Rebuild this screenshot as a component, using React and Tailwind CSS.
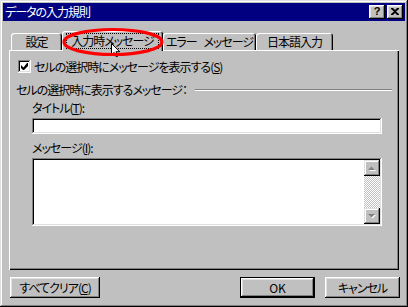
export default function App() {
  return (
    <div className="relative w-[408px] h-[307px] overflow-hidden bg-[#c0c0c0] p-[3px] flex flex-col text-black text-[12px] leading-[14px] tracking-[-1px] font-['Noto_Sans_CJK_JP',sans-serif] [font-feature-settings:'palt'] shadow-[inset_-1px_-1px_#000,inset_1px_1px_#dfdfdf,inset_-2px_-2px_#808080,inset_2px_2px_#fff]">
      {/* Title bar */}
      <div className="h-[18px] bg-[#000080] flex items-center pl-[2px] pr-[2px]">
        <span className="text-white text-[12px] leading-[14px]">データの入力規則</span>
        <div className="ml-auto flex gap-[2px]">
          <div className="w-[16px] h-[14px] bg-[#c0c0c0] flex items-center justify-center shadow-[inset_-1px_-1px_#000,inset_1px_1px_#fff,inset_-2px_-2px_#808080,inset_2px_2px_#dfdfdf]">
            <span className="font-['Liberation_Sans',sans-serif] tracking-normal font-bold text-[11px] leading-[11px] -mt-[1px]">?</span>
          </div>
          <div className="w-[16px] h-[14px] bg-[#c0c0c0] flex items-center justify-center shadow-[inset_-1px_-1px_#000,inset_1px_1px_#fff,inset_-2px_-2px_#808080,inset_2px_2px_#dfdfdf]">
            <svg width="8" height="7" viewBox="0 0 8 7" className="-mt-[1px]">
              <path d="M0 0h2l2 2 2-2h2v1L5 3.5 8 6v1H6L4 5 2 7H0V6l3-2.5L0 1z" fill="#000" />
            </svg>
          </div>
        </div>
      </div>

      {/* Tabs */}
      <div className="mt-[10px] flex items-end pl-[8px]">
        <div className="w-[51px] h-[17px] rounded-t-[3px] flex items-center justify-center pt-[1px] shadow-[inset_1px_1px_#fff,inset_-1px_0_#000,inset_-2px_0_#808080]">
          設定
        </div>
        <div className="relative z-10 w-[101px] h-[20px] -mb-px bg-[#c0c0c0] rounded-t-[3px] pt-[2px] px-[4px] shadow-[inset_1px_1px_#fff,inset_-1px_0_#000,inset_-2px_0_#808080]">
          <div className="h-[16px] border border-dotted border-black flex items-center justify-center">
            入力時メッセージ
          </div>
        </div>
        <div className="w-[93px] h-[17px] rounded-t-[3px] flex items-center justify-center pt-[1px] [word-spacing:5px] shadow-[inset_1px_1px_#fff,inset_-1px_0_#000,inset_-2px_0_#808080]">
          エラー メッセージ
        </div>
        <div className="w-[77px] h-[17px] rounded-t-[3px] flex items-center justify-center pt-[1px] shadow-[inset_1px_1px_#fff,inset_-1px_0_#000,inset_-2px_0_#808080]">
          日本語入力
        </div>
      </div>

      {/* Panel */}
      <div className="mx-[6px] h-[220px] flex flex-col shadow-[inset_1px_1px_#fff,inset_-1px_-1px_#000,inset_-2px_-2px_#808080]">
        <div className="mt-[10px] ml-[9px] flex items-center gap-[3px] h-[13px]">
          <div className="w-[13px] h-[13px] bg-white flex items-center justify-center shadow-[inset_-1px_-1px_#fff,inset_1px_1px_#808080,inset_-2px_-2px_#dfdfdf,inset_2px_2px_#000]">
            <svg width="7" height="7" viewBox="0 0 7 7">
              <path d="M6 0h1v3L3 7H2L0 5V2l2.5 2.5z" fill="#000" />
            </svg>
          </div>
          <span>
            セルの選択時にメッセージを表示する(<span className="underline">S</span>)
          </span>
        </div>

        <div className="mt-[10px] ml-[7px] mr-[7px] h-[14px] flex items-center">
          <span>セルの選択時に表示するメッセージ：</span>
          <div className="flex-1 ml-[8px] h-[2px] border-t border-t-[#808080] border-b border-b-white" />
        </div>

        <div className="mt-[4px] ml-[23px] h-[14px]">
          タイトル(<span className="underline">T</span>):
        </div>
        <div className="mt-[3px] ml-[23px] w-[350px] h-[16px] bg-white shadow-[inset_-1px_-1px_#fff,inset_1px_1px_#808080,inset_-2px_-2px_#dfdfdf,inset_2px_2px_#000]" />

        <div className="mt-[7px] ml-[23px] h-[14px]">
          メッセージ(<span className="underline">I</span>):
        </div>
        <div className="mt-[3px] ml-[23px] w-[350px] h-[68px] bg-white p-[2px] flex justify-end shadow-[inset_-1px_-1px_#fff,inset_1px_1px_#808080,inset_-2px_-2px_#dfdfdf,inset_2px_2px_#000]">
          <div className="w-[16px] flex flex-col">
            <div className="h-[16px] bg-[#c0c0c0] flex items-center justify-center shadow-[inset_-1px_-1px_#000,inset_1px_1px_#dfdfdf,inset_-2px_-2px_#808080,inset_2px_2px_#fff]">
              <svg width="8" height="5" viewBox="0 0 8 5">
                <path d="M1 5h7L4.5 1.5z" fill="#fff" />
                <path d="M0 4h7L3.5 0.5z" fill="#808080" />
              </svg>
            </div>
            <div className="flex-1 bg-[repeating-conic-gradient(#c0c0c0_0_25%,#fff_0_50%)] bg-[length:2px_2px]" />
            <div className="h-[16px] bg-[#c0c0c0] flex items-center justify-center shadow-[inset_-1px_-1px_#000,inset_1px_1px_#dfdfdf,inset_-2px_-2px_#808080,inset_2px_2px_#fff]">
              <svg width="8" height="5" viewBox="0 0 8 5">
                <path d="M1 1h7L4.5 4.5z" fill="#fff" />
                <path d="M0 0h7L3.5 3.5z" fill="#808080" />
              </svg>
            </div>
          </div>
        </div>
      </div>

      {/* Buttons */}
      <div className="mt-[7px] flex pl-[7px] pr-[5px]">
        <div className="w-[90px] h-[21px] flex items-center justify-center shadow-[inset_-1px_-1px_#000,inset_1px_1px_#fff,inset_-2px_-2px_#808080,inset_2px_2px_#dfdfdf]">
          すべてクリア(<span className="underline">C</span>)
        </div>
        <div className="ml-auto w-[75px] h-[21px] border border-black flex items-center justify-center tracking-normal shadow-[inset_-1px_-1px_#000,inset_1px_1px_#fff,inset_-2px_-2px_#808080,inset_2px_2px_#dfdfdf]">
          OK
        </div>
        <div className="ml-[10px] w-[75px] h-[21px] flex items-center justify-center shadow-[inset_-1px_-1px_#000,inset_1px_1px_#fff,inset_-2px_-2px_#808080,inset_2px_2px_#dfdfdf]">
          キャンセル
        </div>
      </div>

      {/* Mouse cursor */}
      <svg className="absolute left-[111px] top-[43px] z-20" width="10" height="15" viewBox="0 0 10 15">
        <path d="M0.5 0.5V12L3.2 9.4L5.2 13.8L7 13L5 8.7H8.8Z" fill="#fff" stroke="#000" strokeWidth="1" strokeLinejoin="miter" />
      </svg>

      {/* Red ellipse */}
      <svg className="absolute left-[60px] top-[26px] z-30" width="106" height="32" viewBox="0 0 106 32">
        <ellipse cx="53" cy="16" rx="49" ry="12.5" fill="none" stroke="#ff0000" strokeWidth="3.2" />
      </svg>
    </div>
  );
}
